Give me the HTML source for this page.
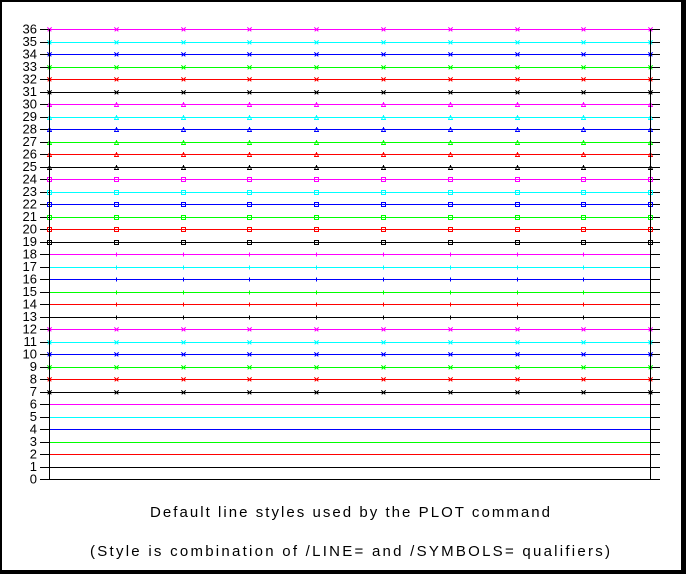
<!DOCTYPE html>
<html><head><meta charset="utf-8"><style>
html,body{margin:0;padding:0;background:#fff}
svg{display:block}
text{font-family:"Liberation Sans",sans-serif}
</style></head><body>
<svg id="s" width="686" height="574" viewBox="0 0 686 574" xmlns="http://www.w3.org/2000/svg">
<rect x="0" y="0" width="686" height="574" fill="#000"/>
<rect x="2" y="2" width="679" height="568" fill="#fff"/>
<g id="g" shape-rendering="crispEdges"></g>
<g font-size="13" text-anchor="end" fill="#000">
<text x="37" y="483.5">0</text><text x="37" y="471">1</text><text x="37" y="458.5">2</text><text x="37" y="446">3</text><text x="37" y="433.5">4</text><text x="37" y="421">5</text><text x="37" y="408.5">6</text><text x="37" y="396">7</text><text x="37" y="383.5">8</text><text x="37" y="371">9</text><text x="37" y="358.5">10</text><text x="37" y="346">11</text><text x="37" y="333.5">12</text><text x="37" y="321">13</text><text x="37" y="308.5">14</text><text x="37" y="296">15</text><text x="37" y="283.5">16</text><text x="37" y="271">17</text><text x="37" y="258.5">18</text><text x="37" y="246">19</text><text x="37" y="233.5">20</text><text x="37" y="221">21</text><text x="37" y="208.5">22</text><text x="37" y="196">23</text><text x="37" y="183.5">24</text><text x="37" y="171">25</text><text x="37" y="158.5">26</text><text x="37" y="146">27</text><text x="37" y="133.5">28</text><text x="37" y="121">29</text><text x="37" y="108.5">30</text><text x="37" y="96">31</text><text x="37" y="83.5">32</text><text x="37" y="71">33</text><text x="37" y="58.5">34</text><text x="37" y="46">35</text><text x="37" y="33.5">36</text>
</g>
<text x="150" y="517" font-size="15" fill="#000" textLength="400" lengthAdjust="spacing">Default line styles used by the PLOT command</text>
<text x="90" y="556" font-size="15" fill="#000" textLength="520" lengthAdjust="spacing">(Style is combination of /LINE= and /SYMBOLS= qualifiers)</text>
</svg>
<script>
var g=document.getElementById('g'),h='';
var cols=['#f0f','#000','#f00','#0f0','#00f','#0ff'];
function Y(v){return Math.round(479-12.5*v)+0.5;}
for(var v=0;v<=36;v++){
 var y=Y(v);
 h+='<line x1="40" y1="'+y+'" x2="49" y2="'+y+'" stroke="#000"/>';
 h+='<line x1="650" y1="'+y+'" x2="660" y2="'+y+'" stroke="#000"/>';
 if(v==0){h+='<line x1="49" y1="'+y+'" x2="650" y2="'+y+'" stroke="#000"/>';continue;}
 var c=cols[v%6];
 h+='<line x1="49" y1="'+y+'" x2="650" y2="'+y+'" stroke="'+c+'"/>';
 if(v>=7){
  var t=Math.floor((v-7)/6);
  for(var i=0;i<10;i++){
   var x=Math.round(49+i*66.8)+0.5;
   if(t==0||t==4){h+='<path d="M'+(x-2)+' '+(y-2)+'l4 4M'+(x+2)+' '+(y-2)+'l-4 4" stroke="'+c+'"/>';}
   else if(t==1){h+='<path d="M'+x+' '+(y-2)+'v4" stroke="'+c+'"/>';}
   else if(t==2){h+='<rect x="'+(x-2)+'" y="'+(y-2)+'" width="4" height="4" fill="none" stroke="'+c+'"/>';}
   else {h+='<path d="M'+(x-2)+' '+(y+2)+'L'+x+' '+(y-2)+'L'+(x+2)+' '+(y+2)+'Z" fill="none" stroke="'+c+'"/>';}
  }
 }
}
h+='<line x1="49.5" y1="29" x2="49.5" y2="480" stroke="#000"/>';
h+='<line x1="650.5" y1="29" x2="650.5" y2="480" stroke="#000"/>';
g.innerHTML=h;
</script>
</body></html>
